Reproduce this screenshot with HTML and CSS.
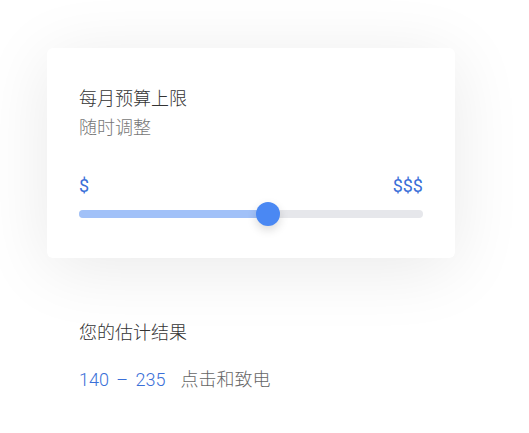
FILE: index.html
```html
<!DOCTYPE html>
<html lang="zh">
<head>
    <meta charset="utf-8">
    <title>预算</title>
    <link rel="stylesheet" href="styles.css">
</head>
<body>
    <div class="page">
        <div class="card">
            <div class="title">每月预算上限</div>
            <div class="sub">随时调整</div>
            <div class="labels">
                <span>$</span>
                <span>$$$</span>
            </div>
            <div class="track">
                <div class="fill" style="width: 55%">
                    <div class="thumb"></div>
                </div>
            </div>
        </div>

        <div class="result">
            <div class="result-title">您的估计结果</div>
            <div class="result-line">
                <span class="range">140 – 235</span>
                <span class="call">点击和致电</span>
            </div>
        </div>
    </div>
</body>
</html>
```

FILE: styles.css
```css
* {
    margin: 0;
    padding: 0;
    box-sizing: border-box;
}

body {
    background: #fff;
    font-family: Roboto, "Noto Sans CJK SC", sans-serif;
    font-weight: 300;
    font-size: 18px;
    line-height: 28px;
}

.page {
    padding: 48px 74px 0 47px;
}

.card {
    width: 408px;
    background: #fff;
    border-radius: 6px;
    padding: 37px 32px 40px;
    box-shadow: 0 10px 70px rgba(0, 0, 0, 0.09);
}

.title {
    color: #333;
}

.sub {
    margin-top: 1px;
    color: #777;
}

.labels {
    margin-top: 30px;
    display: flex;
    justify-content: space-between;
    color: #3a6fd8;
    font-weight: 400;
}

.track {
    margin-top: 10px;
    height: 8px;
    border-radius: 4px;
    background: #e6e7eb;
}

.fill {
    position: relative;
    height: 8px;
    border-radius: 4px;
    background: #a1c1f8;
}

.thumb {
    position: absolute;
    right: -12px;
    top: -8px;
    width: 24px;
    height: 24px;
    border-radius: 50%;
    background: #4a88f3;
    box-shadow: 0 4px 10px rgba(0, 0, 0, 0.15);
}

.result {
    padding: 61px 32px 0;
}

.result-title {
    color: #333;
}

.result-line {
    margin-top: 19px;
    display: flex;
    gap: 15px;
}

.range {
    color: #3a6fd8;
    word-spacing: 3px;
}

.call {
    color: #666;
}
```
